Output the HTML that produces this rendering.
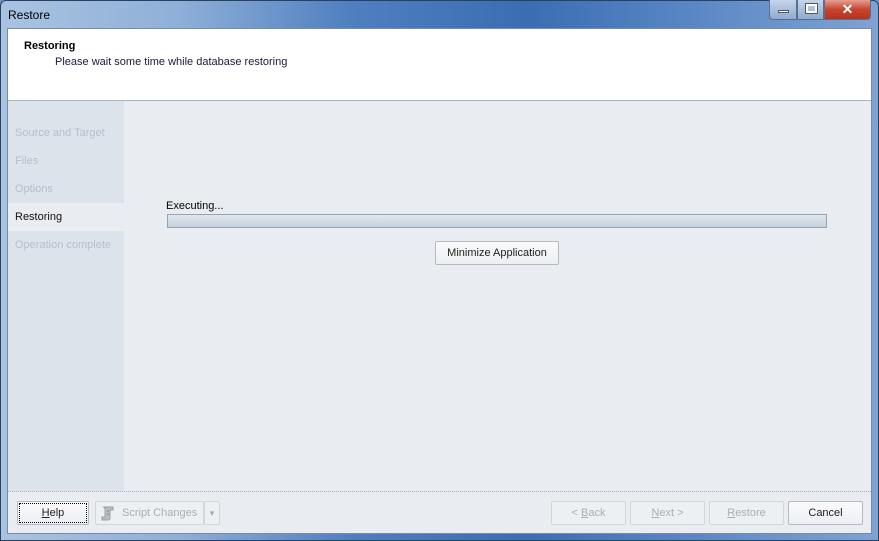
<!DOCTYPE html>
<html><head><style>
*{margin:0;padding:0;box-sizing:border-box}
body{width:879px;height:541px;overflow:hidden;font-family:"Liberation Sans",sans-serif;font-size:11px;background:#6f98c8;position:relative}
.frame{position:absolute;left:0;top:0;width:879px;height:541px;border-radius:6px 6px 0 0;background:linear-gradient(90deg,#a9c3e2 0%,#8fb0d8 20%,#4f7fbf 40%,#3a6db3 60%,#5c89c5 80%,#7ea3d3 100%);border:1px solid #2b3f5e}
.title{position:absolute;left:8px;top:8px;font-size:12px;color:#000}
.ctl{position:absolute;top:0;height:20px;border:1px solid #5b6f8c;border-top:none}
.client{position:absolute;left:7px;top:28px;width:865px;height:506px;background:#e9ecf0;border:1px solid #7a8aa2}
.hdr{position:absolute;left:0;top:0;width:863px;height:72px;background:#fff;border-bottom:1px solid #a9b2bf}
.side{position:absolute;left:0;top:72px;width:116px;height:390px;background:#dde3ea}
.side div{height:28px;line-height:28px;padding-left:7px;color:#b5bec9}
.btn{position:absolute;height:24px;border:1px solid #b4bac2;border-radius:2px;background:linear-gradient(#fbfbfc,#eceef1);text-align:center;line-height:23px;color:#222}
.dis{color:#a8aeb6;border-color:#d2d6db;background:#edf0f3}
</style></head><body>
<div class="frame"></div>
<div class="title">Restore</div>
<div class="ctl" style="left:769px;width:28px;background:linear-gradient(#c5d5ea,#8eaad0);border-radius:0 0 0 4px"><div style="position:absolute;left:8px;top:10px;width:11px;height:3px;background:#fff;border:1px solid #556"></div></div>
<div class="ctl" style="left:797px;width:27px;background:linear-gradient(#c5d5ea,#8eaad0)"><div style="position:absolute;left:8px;top:4px;width:11px;height:9px;border:2px solid #fff;outline:1px solid #556"></div></div>
<div class="ctl" style="left:824px;width:47px;background:linear-gradient(#e3a093,#c8442e 50%,#b8321c);border-radius:0 0 4px 0;color:#fff;font-weight:bold;font-size:14px;text-align:center;line-height:18px">✕</div>
<div class="client">
 <div class="hdr">
  <div style="position:absolute;left:16px;top:11px;font-weight:bold;font-size:11px">Restoring</div>
  <div style="position:absolute;left:47px;top:27px;color:#1a1a3a">Please wait some time while database restoring</div>
 </div>
 <div class="side" style="padding-top:18px">
  <div>Source and Target</div><div>Files</div><div>Options</div>
  <div style="background:#e9ecf1;color:#111">Restoring</div>
  <div>Operation complete</div>
 </div>
 <div style="position:absolute;left:158px;top:171px">Executing...</div>
 <div style="position:absolute;left:159px;top:185px;width:660px;height:14px;border:1px solid #9aa2ac;background:linear-gradient(#e0e7ef,#c4d0dd)"></div>
 <div class="btn" style="left:427px;top:212px;width:124px">Minimize Application</div>
 <div style="position:absolute;left:0;top:462px;width:863px;border-top:1px dotted #a8adb5"></div>
 <div class="btn" style="left:9px;top:472px;width:72px;outline:1px dotted #000;outline-offset:-3px"><u>H</u>elp</div>
 <div class="btn dis" style="left:87px;top:472px;width:109px;text-align:left;padding-left:26px">
  <svg style="position:absolute;left:4px;top:3px" width="16" height="16" viewBox="0 0 16 16"><path d="M3 2h10v3h-3v8a2 2 0 0 1-2 2H2v-3h3V4a2 2 0 0 0-2-2z" fill="#b9bcc0" stroke="#9a9da2"/><path d="M7 6h2M7 9h2" stroke="#888"/></svg>Script Changes</div>
 <div class="btn dis" style="left:196px;top:472px;width:16px;font-size:8px">▼</div>
 <div class="btn dis" style="left:543px;top:472px;width:75px">&lt; <u>B</u>ack</div>
 <div class="btn dis" style="left:622px;top:472px;width:75px"><u>N</u>ext &gt;</div>
 <div class="btn dis" style="left:701px;top:472px;width:75px"><u>R</u>estore</div>
 <div class="btn" style="left:780px;top:472px;width:75px">Cancel</div>
</div>
</body></html>
